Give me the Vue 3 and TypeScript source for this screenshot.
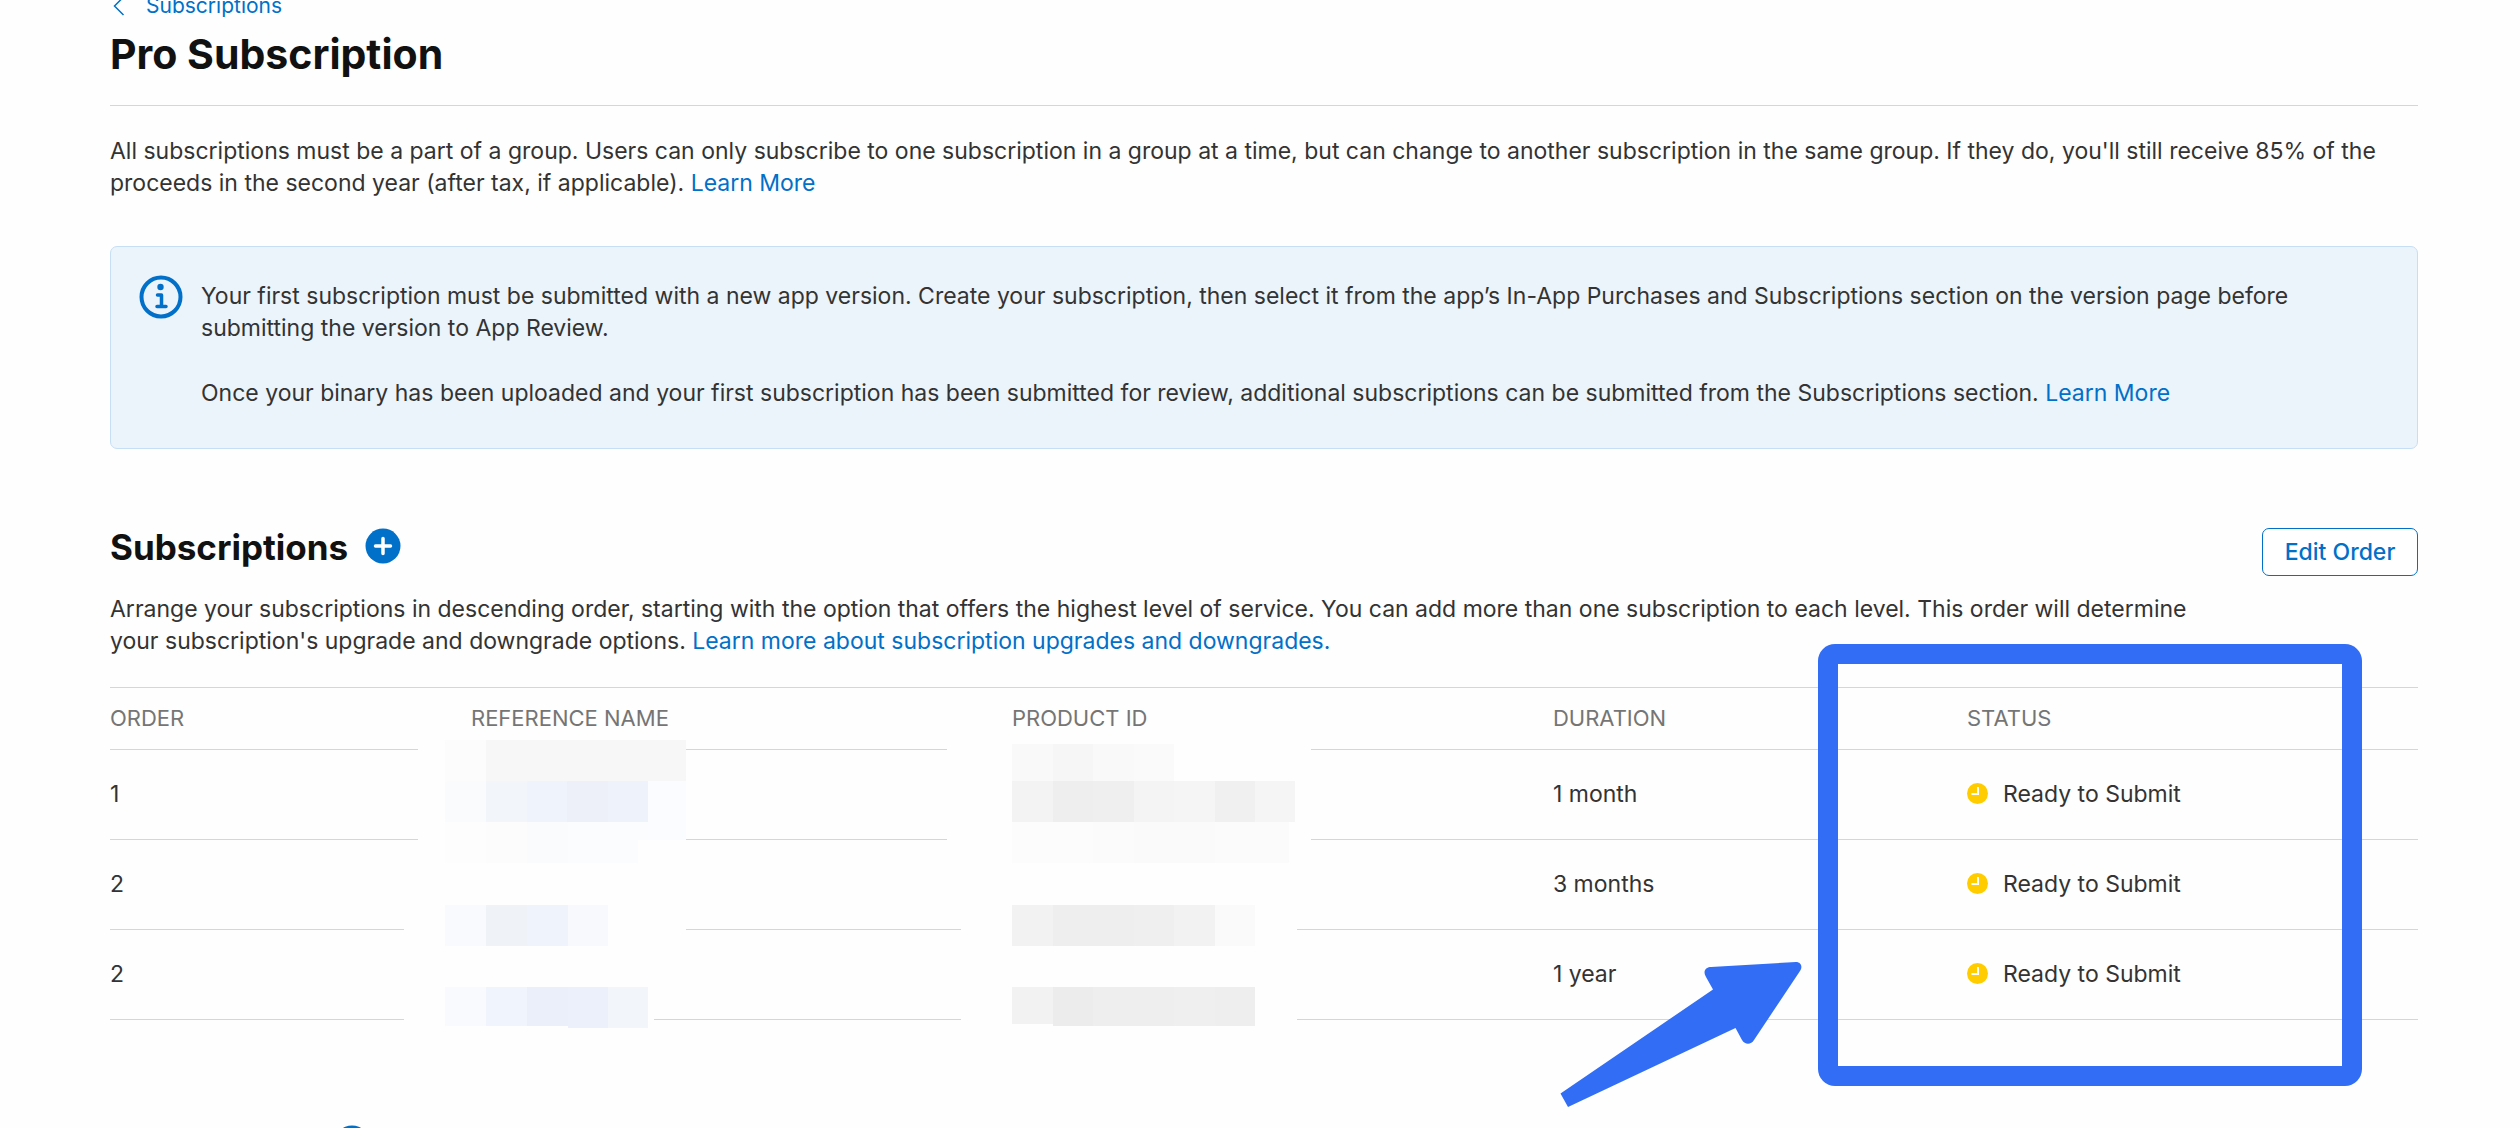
<script setup lang="ts">
interface Subscription {
  order: number
  duration: string
  status: string
}

interface Tile {
  x: number
  y: number
  w: number
  h: number
  fill: string
}

const subscriptions: Subscription[] = [
  { order: 1, duration: '1 month', status: 'Ready to Submit' },
  { order: 2, duration: '3 months', status: 'Ready to Submit' },
  { order: 2, duration: '1 year', status: 'Ready to Submit' },
]

const tile = (x: number, y: number, w: number, h: number, fill: string): Tile => ({ x, y, w, h, fill })

// Pixelated covers that hide the reference names and product identifiers.
const nameTiles: Tile[] = [
  tile(14, 0, 268, 190, '#fefefe'),
  tile(0, 186, 250, 102, '#fefefe'),
  tile(41, 0, 41, 41, '#fcfcfc'),
  tile(82, 0, 200, 41, '#f7f7f7'),
  tile(41, 41, 41, 41, '#fafbfd'),
  tile(82, 41, 41, 41, '#f2f5fa'),
  tile(123, 41, 40, 41, '#eff3fc'),
  tile(163, 41, 41, 41, '#edf0f8'),
  tile(204, 41, 40, 41, '#eef2fb'),
  tile(244, 41, 38, 59, '#fafcff'),
  tile(41, 82, 41, 41, '#fdfdfd'),
  tile(82, 82, 41, 41, '#fcfcfc'),
  tile(123, 82, 41, 41, '#fafbfc'),
  tile(164, 82, 80, 41, '#fbfcfe'),
  tile(234, 100, 48, 87, '#fefefe'),
  tile(41, 165, 41, 41, '#f9fafd'),
  tile(82, 165, 41, 41, '#eff3f8'),
  tile(123, 165, 41, 41, '#eff3fc'),
  tile(164, 165, 40, 41, '#f7f9fd'),
  tile(41, 247, 41, 39, '#f9fafd'),
  tile(82, 247, 41, 39, '#f0f4fd'),
  tile(123, 247, 41, 39, '#ebeff9'),
  tile(164, 247, 40, 41, '#ecf0fa'),
  tile(204, 247, 40, 41, '#f2f5fa'),
]

const productTiles: Tile[] = [
  tile(0, 0, 364, 99, '#fefefe'),
  tile(14, 99, 336, 183, '#fefefe'),
  tile(65, 0, 41, 37, '#f9f9f9'),
  tile(106, 0, 40, 37, '#f6f6f6'),
  tile(146, 0, 41, 37, '#f9f9f9'),
  tile(187, 0, 40, 37, '#fafafa'),
  tile(65, 37, 41, 41, '#f3f3f3'),
  tile(106, 37, 40, 41, '#eeeeee'),
  tile(146, 37, 41, 41, '#efefef'),
  tile(187, 37, 40, 41, '#f4f4f4'),
  tile(227, 37, 41, 41, '#f5f5f5'),
  tile(268, 37, 40, 41, '#f0f0f0'),
  tile(308, 37, 40, 41, '#f5f5f5'),
  tile(65, 78, 81, 41, '#fcfcfc'),
  tile(146, 78, 41, 41, '#fbfbfb'),
  tile(187, 78, 81, 41, '#fafafa'),
  tile(268, 78, 74, 41, '#fbfbfb'),
  tile(65, 161, 41, 41, '#f2f2f2'),
  tile(106, 161, 81, 41, '#eeeeee'),
  tile(187, 161, 40, 41, '#efefef'),
  tile(227, 161, 41, 41, '#f2f2f2'),
  tile(268, 161, 40, 41, '#fafafa'),
  tile(65, 243, 41, 37, '#f2f2f2'),
  tile(106, 243, 40, 39, '#ececec'),
  tile(146, 243, 81, 39, '#eeeeee'),
  tile(227, 243, 41, 39, '#efefef'),
  tile(268, 243, 40, 39, '#eeeeee'),
]
</script>

<template>
  <main class="page">
    <nav class="crumbs" aria-label="Breadcrumb">
      <a href="#" class="crumb">
        <svg class="chevron" viewBox="0 0 12 20" aria-hidden="true">
          <path d="M10.500 1 L1.500 10 L10.500 19" fill="none" stroke="currentColor" stroke-width="1.500" />
        </svg>
        Subscriptions
      </a>
    </nav>

    <h1 class="title">Pro Subscription</h1>

    <p class="intro">
      All subscriptions must be a part of a group. Users can only subscribe to one subscription in a group at a time,
      but can change to another subscription in the same group. If they do, you'll still receive 85% of the proceeds in
      the second year (after tax, if applicable). <a href="#">Learn More</a>
    </p>

    <aside class="notice">
      <svg class="info" viewBox="0 0 44 44" aria-hidden="true">
        <circle cx="22" cy="22" r="19.500" fill="none" stroke="#0070c9" stroke-width="4" />
        <circle cx="21.500" cy="12" r="3.200" fill="#0070c9" />
        <path d="M18.500 20 H22.500 V31 M18 31.500 H27" fill="none" stroke="#0070c9" stroke-width="3.500" stroke-linecap="round" stroke-linejoin="round" />
      </svg>
      <div class="notice-text">
        <p>
          Your first subscription must be submitted with a new app version. Create your subscription, then select it
          from the app’s In-App Purchases and Subscriptions section on the version page before submitting the version to
          App Review.
        </p>
        <p>
          Once your binary has been uploaded and your first subscription has been submitted for review, additional
          subscriptions can be submitted from the Subscriptions section. <a href="#">Learn More</a>
        </p>
      </div>
    </aside>

    <header class="section-head">
      <div class="section-text">
        <div class="heading-row">
          <h2>Subscriptions</h2>
          <button type="button" class="add" aria-label="Add subscription">
            <svg viewBox="0 0 36 36" aria-hidden="true">
              <circle cx="18" cy="18" r="17.500" fill="#0070c9" />
              <path d="M18 10.500 V25.500 M10.500 18 H25.500" stroke="#fff" stroke-width="3.500" stroke-linecap="round" />
            </svg>
          </button>
        </div>
        <p class="description">
          Arrange your subscriptions in descending order, starting with the option that offers the highest level of
          service. You can add more than one subscription to each level. This order will determine your subscription's
          upgrade and downgrade options.
          <a href="#">Learn more about subscription upgrades and downgrades.</a>
        </p>
      </div>
      <button type="button" class="edit">Edit Order</button>
    </header>

    <div class="table-wrap">
      <table>
        <thead>
          <tr>
            <th class="col-order" scope="col">ORDER</th>
            <th class="col-name" scope="col">REFERENCE NAME</th>
            <th class="col-product" scope="col">PRODUCT ID</th>
            <th class="col-duration" scope="col">DURATION</th>
            <th class="col-status" scope="col">STATUS</th>
          </tr>
        </thead>
        <tbody>
          <tr v-for="(item, index) in subscriptions" :key="index">
            <td>{{ item.order }}</td>
            <td></td>
            <td></td>
            <td>{{ item.duration }}</td>
            <td>
              <span class="status">
                <svg class="clock" viewBox="0 0 21 21" aria-hidden="true">
                  <circle cx="10.500" cy="10.500" r="10.500" fill="#fc0" />
                  <path d="M11 4 V11 H4.500" fill="none" stroke="#fff" stroke-width="2" />
                </svg>
                {{ item.status }}
              </span>
            </td>
          </tr>
        </tbody>
      </table>

      <svg class="mosaic mosaic-name" viewBox="0 0 282 288" shape-rendering="crispEdges" aria-hidden="true">
        <rect v-for="(t, i) in nameTiles" :key="i" :x="t.x" :y="t.y" :width="t.w" :height="t.h" :fill="t.fill" />
      </svg>
      <svg class="mosaic mosaic-product" viewBox="0 0 364 282" shape-rendering="crispEdges" aria-hidden="true">
        <rect v-for="(t, i) in productTiles" :key="i" :x="t.x" :y="t.y" :width="t.w" :height="t.h" :fill="t.fill" />
      </svg>

      <div class="highlight"><div class="highlight-frame"></div></div>
      <svg class="arrow" viewBox="0 0 243 146" aria-hidden="true">
        <path
          d="M0.500 132.500 L153 28.500 L146 16 C142 9 147 6 151 6 L236 1 C241 1 243 6 240 10 L194 79 C191 84 185 84 182 79 L175.500 67 L8 146 Z"
          fill="#326df5"
        />
      </svg>
    </div>

    <footer class="next-section">
      <button type="button" class="add" aria-label="Add item">
        <svg viewBox="0 0 36 36" aria-hidden="true">
          <circle cx="18" cy="18" r="17.500" fill="#0070c9" />
          <path d="M18 10.500 V25.500 M10.500 18 H25.500" stroke="#fff" stroke-width="3.500" stroke-linecap="round" />
        </svg>
      </button>
    </footer>
  </main>
</template>

<style>
body {
  background: #fefefe;
}
</style>

<style scoped>
.page {
  box-sizing: border-box;
  height: 100vh;
  overflow: hidden;
  padding: 0 102px 0 110px;
  font-family: Inter, "Liberation Sans", sans-serif;
  font-size: 23px;
  line-height: 32px;
  color: #333;
}

p,
h1,
h2 {
  margin: 0;
}

a {
  color: #0070c9;
  text-decoration: none;
}

button {
  font: inherit;
  cursor: pointer;
}

.crumbs {
  display: flex;
  margin-top: -10px;
  font-size: 21px;
}

.crumb {
  display: flex;
  align-items: center;
  gap: 21px;
  padding-left: 3px;
}

.chevron {
  width: 12px;
  height: 20px;
}

.title {
  padding: 8px 0 26px;
  border-bottom: 1px solid #d6d6d6;
  font-size: 41px;
  line-height: 49px;
  font-weight: 700;
  color: #111;
}

.intro {
  margin-top: 29px;
}

.notice {
  display: flex;
  align-items: flex-start;
  gap: 18px;
  box-sizing: border-box;
  margin-top: 47px;
  padding: 28px 27px 39px 28px;
  border: 1px solid #c7dff4;
  border-radius: 7px;
  background: #ebf3fb;
}

.info {
  flex: none;
  width: 44px;
  height: 44px;
}

.notice-text {
  display: flex;
  flex-direction: column;
  gap: 33px;
  padding-top: 5px;
}

.section-head {
  display: flex;
  justify-content: space-between;
  align-items: flex-start;
  margin-top: 79px;
}

.section-text {
  width: 91%;
}

.heading-row {
  display: flex;
  align-items: flex-start;
  gap: 17px;
}

h2 {
  font-size: 35px;
  line-height: 38px;
  font-weight: 700;
  color: #111;
}

.add {
  width: 36px;
  height: 36px;
  padding: 0;
  border: 0;
  background: none;
}

.add svg {
  display: block;
}

.description {
  margin-top: 27px;
}

.edit {
  width: 156px;
  height: 48px;
  padding: 0;
  border: 1px solid #0070c9;
  border-radius: 7px;
  background: #fff;
  font-weight: 500;
  color: #0070c9;
}

.table-wrap {
  position: relative;
  margin-top: 30px;
}

table {
  width: 100%;
  table-layout: fixed;
  border-collapse: separate;
  border-spacing: 0;
  border-top: 1px solid #d6d6d6;
}

th,
td {
  box-sizing: border-box;
  padding: 0 0 2px;
  border-bottom: 1px solid #d6d6d6;
  text-align: left;
}

th {
  height: 62px;
  font-size: 22px;
  font-weight: 400;
  color: #757575;
}

td {
  height: 90px;
}

.col-order {
  width: 15.64%;
}

.col-name,
.col-product {
  width: 23.44%;
}

.col-duration {
  width: 17.94%;
}

.status {
  display: flex;
  align-items: center;
  gap: 15px;
}

.clock {
  width: 21px;
  height: 21px;
}

.mosaic,
.highlight,
.arrow {
  position: absolute;
}

.mosaic-name {
  top: 53px;
  left: 12.74%;
  width: 282px;
  height: 288px;
}

.mosaic-product {
  top: 57px;
  left: 36.26%;
  width: 364px;
  height: 282px;
}

.highlight {
  top: -43px;
  left: 74%;
  right: 56px;
  height: 442px;
  overflow: hidden;
  border-radius: 17px;
}

.highlight-frame {
  box-sizing: border-box;
  height: 100%;
  border: 20px solid #326df5;
}

.arrow {
  top: 274px;
  left: 62.83%;
  width: 243px;
  height: 146px;
}

.next-section {
  margin-top: 105px;
  padding-left: 224px;
}
</style>
